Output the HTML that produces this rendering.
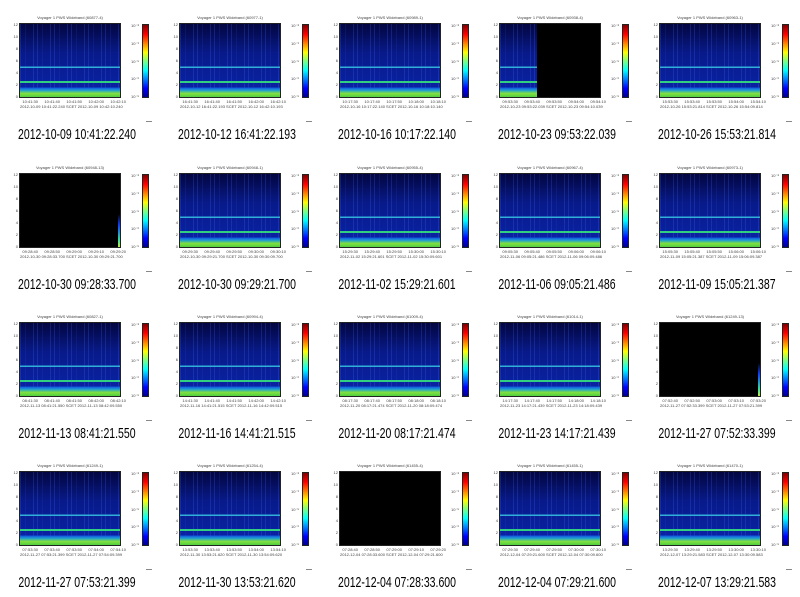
<!DOCTYPE html>
<html><head><meta charset="utf-8"><style>
body{margin:0;width:800px;height:596px;background:#fff;position:relative;overflow:hidden;font-family:"Liberation Sans",sans-serif}
.c{position:absolute;width:160px;height:149px}
.t{position:absolute;left:20px;top:15px;width:100px;text-align:center;font-size:4px;color:#444;white-space:nowrap}
.p{position:absolute;left:20px;top:24px;width:100px;height:73px;outline:1px solid #222;
background:linear-gradient(to bottom,transparent 58%,#30b0d8 58%,#30b0d8 60.5%,transparent 60.5%,transparent 78%,#30d080 78%,#30d080 80.5%,transparent 80.5%,transparent 87%,#1050e0 87%,#20a0d0 91%,#80e040 95%,#50d040 100%),
repeating-linear-gradient(90deg,rgba(70,110,255,.22) 0 1px,transparent 1px 5px,rgba(50,80,220,.15) 5px 6px,transparent 6px 13px,rgba(80,120,255,.2) 13px 14px,transparent 14px 17px),
linear-gradient(#030640,#081a8a 40%,#0a24a8)}
.b{position:absolute;top:0;bottom:0;right:0;background:#000}
.s{position:absolute;top:0;bottom:0;right:0;width:2px;background:linear-gradient(#000 55%,#1040ff 70%,#30e0a0 90%,#c0f040)}
.y{position:absolute;left:8px;top:22px;height:77px;width:10px;font-size:4px;color:#444;display:flex;flex-direction:column;justify-content:space-between;text-align:right}
.x{position:absolute;left:16px;top:99px;width:110px;font-size:4px;color:#444;display:flex;justify-content:space-between}
.x2{position:absolute;left:20px;top:104px;width:110px;font-size:4px;color:#444;white-space:nowrap}
.cb{position:absolute;left:143px;top:25px;width:5px;height:72px;outline:1px solid #222;background:linear-gradient(to top,#00008f,#0000ff 12%,#00ffff 37%,#7fff7f 50%,#ffff00 62%,#ff0000 87%,#800000)}
.cl{position:absolute;left:131px;top:23px;height:76px;font-size:4px;color:#444;display:flex;flex-direction:column;justify-content:space-between}
.d{position:absolute;left:146px;top:121px;width:6px;height:1px;background:#888}
.cap{position:absolute;left:-23px;top:126px;width:200px;text-align:center;font-size:15px;color:#000;transform:scaleX(.7);white-space:nowrap}
</style></head><body>

<div class="c" style="left:0;top:0"><div class="t">Voyager 1 PWS Wideband (60877-4)</div><div class="y"><span>12</span><span>10</span><span>8</span><span>6</span><span>4</span><span>2</span><span>0</span></div><div class="p"></div><div class="x"><span></span><span>10:41:30</span><span>10:41:40</span><span>10:41:50</span><span>10:42:00</span><span>10:42:10</span></div><div class="x2">2012-10-09 10:41:22.240 SCET 2012-10-09 10:42:10.240</div><div class="cl"><span>10⁻⁸</span><span>10⁻⁹</span><span>10⁻⁵</span><span>10⁻⁶</span><span>10⁻⁵</span></div><div class="cb"></div><div class="d"></div><div class="cap">2012-10-09 10:41:22.240</div></div>

<div class="c" style="left:160px;top:0"><div class="t">Voyager 1 PWS Wideband (60977-1)</div><div class="y"><span>12</span><span>10</span><span>8</span><span>6</span><span>4</span><span>2</span><span>0</span></div><div class="p"></div><div class="x"><span></span><span>16:41:30</span><span>16:41:40</span><span>16:41:50</span><span>16:42:00</span><span>16:42:10</span></div><div class="x2">2012-10-12 16:41:22.193 SCET 2012-10-12 16:42:10.193</div><div class="cl"><span>10⁻⁸</span><span>10⁻⁹</span><span>10⁻⁵</span><span>10⁻⁶</span><span>10⁻⁵</span></div><div class="cb"></div><div class="d"></div><div class="cap">2012-10-12 16:41:22.193</div></div>

<div class="c" style="left:320px;top:0"><div class="t">Voyager 1 PWS Wideband (60989-1)</div><div class="y"><span>12</span><span>10</span><span>8</span><span>6</span><span>4</span><span>2</span><span>0</span></div><div class="p"></div><div class="x"><span></span><span>10:17:30</span><span>10:17:40</span><span>10:17:50</span><span>10:18:00</span><span>10:18:10</span></div><div class="x2">2012-10-16 10:17:22.140 SCET 2012-10-16 10:18:10.140</div><div class="cl"><span>10⁻⁸</span><span>10⁻⁹</span><span>10⁻⁵</span><span>10⁻⁶</span><span>10⁻⁵</span></div><div class="cb"></div><div class="d"></div><div class="cap">2012-10-16 10:17:22.140</div></div>

<div class="c" style="left:480px;top:0"><div class="t">Voyager 1 PWS Wideband (60938-4)</div><div class="y"><span>12</span><span>10</span><span>8</span><span>6</span><span>4</span><span>2</span><span>0</span></div><div class="p"><div class="b" style="left:37%"></div></div><div class="x"><span></span><span>09:53:30</span><span>09:53:40</span><span>09:53:50</span><span>09:54:00</span><span>09:54:10</span></div><div class="x2">2012-10-23 09:53:22.039 SCET 2012-10-23 09:54:10.039</div><div class="cl"><span>10⁻⁸</span><span>10⁻⁹</span><span>10⁻⁵</span><span>10⁻⁶</span><span>10⁻⁵</span></div><div class="cb"></div><div class="d"></div><div class="cap">2012-10-23 09:53:22.039</div></div>

<div class="c" style="left:640px;top:0"><div class="t">Voyager 1 PWS Wideband (60963-1)</div><div class="y"><span>12</span><span>10</span><span>8</span><span>6</span><span>4</span><span>2</span><span>0</span></div><div class="p"></div><div class="x"><span></span><span>15:53:30</span><span>15:53:40</span><span>15:53:50</span><span>15:54:00</span><span>15:54:10</span></div><div class="x2">2012-10-26 15:53:21.814 SCET 2012-10-26 15:54:09.814</div><div class="cl"><span>10⁻⁸</span><span>10⁻⁹</span><span>10⁻⁵</span><span>10⁻⁶</span><span>10⁻⁵</span></div><div class="cb"></div><div class="d"></div><div class="cap">2012-10-26 15:53:21.814</div></div>

<div class="c" style="left:0;top:150px"><div class="t">Voyager 1 PWS Wideband (60948-13)</div><div class="y"><span>12</span><span>10</span><span>8</span><span>6</span><span>4</span><span>2</span><span>0</span></div><div class="p"><div class="b" style="left:0"></div><div class="s"></div></div><div class="x"><span></span><span>09:28:40</span><span>09:28:50</span><span>09:29:00</span><span>09:29:10</span><span>09:29:20</span></div><div class="x2">2012-10-30 09:28:33.700 SCET 2012-10-30 09:29:21.700</div><div class="cl"><span>10⁻⁸</span><span>10⁻⁹</span><span>10⁻⁵</span><span>10⁻⁶</span><span>10⁻⁵</span></div><div class="cb"></div><div class="d"></div><div class="cap">2012-10-30 09:28:33.700</div></div>

<div class="c" style="left:160px;top:150px"><div class="t">Voyager 1 PWS Wideband (60948-1)</div><div class="y"><span>12</span><span>10</span><span>8</span><span>6</span><span>4</span><span>2</span><span>0</span></div><div class="p"></div><div class="x"><span></span><span>09:29:30</span><span>09:29:40</span><span>09:29:50</span><span>09:30:00</span><span>09:30:10</span></div><div class="x2">2012-10-30 09:29:21.700 SCET 2012-10-30 09:30:09.700</div><div class="cl"><span>10⁻⁸</span><span>10⁻⁹</span><span>10⁻⁵</span><span>10⁻⁶</span><span>10⁻⁵</span></div><div class="cb"></div><div class="d"></div><div class="cap">2012-10-30 09:29:21.700</div></div>

<div class="c" style="left:320px;top:150px"><div class="t">Voyager 1 PWS Wideband (60955-4)</div><div class="y"><span>12</span><span>10</span><span>8</span><span>6</span><span>4</span><span>2</span><span>0</span></div><div class="p"></div><div class="x"><span></span><span>15:29:30</span><span>15:29:40</span><span>15:29:50</span><span>15:30:00</span><span>15:30:10</span></div><div class="x2">2012-11-02 15:29:21.601 SCET 2012-11-02 15:30:09.601</div><div class="cl"><span>10⁻⁸</span><span>10⁻⁹</span><span>10⁻⁵</span><span>10⁻⁶</span><span>10⁻⁵</span></div><div class="cb"></div><div class="d"></div><div class="cap">2012-11-02 15:29:21.601</div></div>

<div class="c" style="left:480px;top:150px"><div class="t">Voyager 1 PWS Wideband (60967-4)</div><div class="y"><span>12</span><span>10</span><span>8</span><span>6</span><span>4</span><span>2</span><span>0</span></div><div class="p"></div><div class="x"><span></span><span>09:05:30</span><span>09:05:40</span><span>09:05:50</span><span>09:06:00</span><span>09:06:10</span></div><div class="x2">2012-11-06 09:05:21.486 SCET 2012-11-06 09:06:09.486</div><div class="cl"><span>10⁻⁸</span><span>10⁻⁹</span><span>10⁻⁵</span><span>10⁻⁶</span><span>10⁻⁵</span></div><div class="cb"></div><div class="d"></div><div class="cap">2012-11-06 09:05:21.486</div></div>

<div class="c" style="left:640px;top:150px"><div class="t">Voyager 1 PWS Wideband (60973-1)</div><div class="y"><span>12</span><span>10</span><span>8</span><span>6</span><span>4</span><span>2</span><span>0</span></div><div class="p"></div><div class="x"><span></span><span>15:05:30</span><span>15:05:40</span><span>15:05:50</span><span>15:06:00</span><span>15:06:10</span></div><div class="x2">2012-11-09 15:05:21.387 SCET 2012-11-09 15:06:09.387</div><div class="cl"><span>10⁻⁸</span><span>10⁻⁹</span><span>10⁻⁵</span><span>10⁻⁶</span><span>10⁻⁵</span></div><div class="cb"></div><div class="d"></div><div class="cap">2012-11-09 15:05:21.387</div></div>

<div class="c" style="left:0;top:299px"><div class="t">Voyager 1 PWS Wideband (60827-1)</div><div class="y"><span>12</span><span>10</span><span>8</span><span>6</span><span>4</span><span>2</span><span>0</span></div><div class="p"></div><div class="x"><span></span><span>08:41:30</span><span>08:41:40</span><span>08:41:50</span><span>08:42:00</span><span>08:42:10</span></div><div class="x2">2012-11-13 08:41:21.550 SCET 2012-11-13 08:42:09.550</div><div class="cl"><span>10⁻⁸</span><span>10⁻⁹</span><span>10⁻⁵</span><span>10⁻⁶</span><span>10⁻⁵</span></div><div class="cb"></div><div class="d"></div><div class="cap">2012-11-13 08:41:21.550</div></div>

<div class="c" style="left:160px;top:299px"><div class="t">Voyager 1 PWS Wideband (60994-4)</div><div class="y"><span>12</span><span>10</span><span>8</span><span>6</span><span>4</span><span>2</span><span>0</span></div><div class="p"></div><div class="x"><span></span><span>14:41:30</span><span>14:41:40</span><span>14:41:50</span><span>14:42:00</span><span>14:42:10</span></div><div class="x2">2012-11-16 14:41:21.515 SCET 2012-11-16 14:42:09.515</div><div class="cl"><span>10⁻⁸</span><span>10⁻⁹</span><span>10⁻⁵</span><span>10⁻⁶</span><span>10⁻⁵</span></div><div class="cb"></div><div class="d"></div><div class="cap">2012-11-16 14:41:21.515</div></div>

<div class="c" style="left:320px;top:299px"><div class="t">Voyager 1 PWS Wideband (61009-4)</div><div class="y"><span>12</span><span>10</span><span>8</span><span>6</span><span>4</span><span>2</span><span>0</span></div><div class="p"></div><div class="x"><span></span><span>08:17:30</span><span>08:17:40</span><span>08:17:50</span><span>08:18:00</span><span>08:18:10</span></div><div class="x2">2012-11-20 08:17:21.474 SCET 2012-11-20 08:18:09.474</div><div class="cl"><span>10⁻⁸</span><span>10⁻⁹</span><span>10⁻⁵</span><span>10⁻⁶</span><span>10⁻⁵</span></div><div class="cb"></div><div class="d"></div><div class="cap">2012-11-20 08:17:21.474</div></div>

<div class="c" style="left:480px;top:299px"><div class="t">Voyager 1 PWS Wideband (61014-1)</div><div class="y"><span>12</span><span>10</span><span>8</span><span>6</span><span>4</span><span>2</span><span>0</span></div><div class="p"></div><div class="x"><span></span><span>14:17:30</span><span>14:17:40</span><span>14:17:50</span><span>14:18:00</span><span>14:18:10</span></div><div class="x2">2012-11-23 14:17:21.439 SCET 2012-11-23 14:18:09.439</div><div class="cl"><span>10⁻⁸</span><span>10⁻⁹</span><span>10⁻⁵</span><span>10⁻⁶</span><span>10⁻⁵</span></div><div class="cb"></div><div class="d"></div><div class="cap">2012-11-23 14:17:21.439</div></div>

<div class="c" style="left:640px;top:299px"><div class="t">Voyager 1 PWS Wideband (61249-13)</div><div class="y"><span>12</span><span>10</span><span>8</span><span>6</span><span>4</span><span>2</span><span>0</span></div><div class="p"><div class="b" style="left:0"></div><div class="s"></div></div><div class="x"><span></span><span>07:52:40</span><span>07:52:50</span><span>07:53:00</span><span>07:53:10</span><span>07:53:20</span></div><div class="x2">2012-11-27 07:52:33.399 SCET 2012-11-27 07:53:21.399</div><div class="cl"><span>10⁻⁸</span><span>10⁻⁹</span><span>10⁻⁵</span><span>10⁻⁶</span><span>10⁻⁵</span></div><div class="cb"></div><div class="d"></div><div class="cap">2012-11-27 07:52:33.399</div></div>

<div class="c" style="left:0;top:448px"><div class="t">Voyager 1 PWS Wideband (61249-1)</div><div class="y"><span>12</span><span>10</span><span>8</span><span>6</span><span>4</span><span>2</span><span>0</span></div><div class="p"></div><div class="x"><span></span><span>07:53:30</span><span>07:53:40</span><span>07:53:50</span><span>07:54:00</span><span>07:54:10</span></div><div class="x2">2012-11-27 07:53:21.399 SCET 2012-11-27 07:54:09.399</div><div class="cl"><span>10⁻⁸</span><span>10⁻⁹</span><span>10⁻⁵</span><span>10⁻⁶</span><span>10⁻⁵</span></div><div class="cb"></div><div class="d"></div><div class="cap">2012-11-27 07:53:21.399</div></div>

<div class="c" style="left:160px;top:448px"><div class="t">Voyager 1 PWS Wideband (61254-4)</div><div class="y"><span>12</span><span>10</span><span>8</span><span>6</span><span>4</span><span>2</span><span>0</span></div><div class="p"></div><div class="x"><span></span><span>13:53:30</span><span>13:53:40</span><span>13:53:50</span><span>13:54:00</span><span>13:54:10</span></div><div class="x2">2012-11-30 13:53:21.620 SCET 2012-11-30 13:54:09.620</div><div class="cl"><span>10⁻⁸</span><span>10⁻⁹</span><span>10⁻⁵</span><span>10⁻⁶</span><span>10⁻⁵</span></div><div class="cb"></div><div class="d"></div><div class="cap">2012-11-30 13:53:21.620</div></div>

<div class="c" style="left:320px;top:448px"><div class="t">Voyager 1 PWS Wideband (61455-4)</div><div class="y"><span>12</span><span>10</span><span>8</span><span>6</span><span>4</span><span>2</span><span>0</span></div><div class="p"><div class="b" style="left:0"></div></div><div class="x"><span></span><span>07:28:40</span><span>07:28:50</span><span>07:29:00</span><span>07:29:10</span><span>07:29:20</span></div><div class="x2">2012-12-04 07:28:33.600 SCET 2012-12-04 07:29:21.600</div><div class="cl"><span>10⁻⁸</span><span>10⁻⁹</span><span>10⁻⁵</span><span>10⁻⁶</span><span>10⁻⁵</span></div><div class="cb"></div><div class="d"></div><div class="cap">2012-12-04 07:28:33.600</div></div>

<div class="c" style="left:480px;top:448px"><div class="t">Voyager 1 PWS Wideband (61455-1)</div><div class="y"><span>12</span><span>10</span><span>8</span><span>6</span><span>4</span><span>2</span><span>0</span></div><div class="p"></div><div class="x"><span></span><span>07:29:30</span><span>07:29:40</span><span>07:29:50</span><span>07:30:00</span><span>07:30:10</span></div><div class="x2">2012-12-04 07:29:21.600 SCET 2012-12-04 07:30:09.600</div><div class="cl"><span>10⁻⁸</span><span>10⁻⁹</span><span>10⁻⁵</span><span>10⁻⁶</span><span>10⁻⁵</span></div><div class="cb"></div><div class="d"></div><div class="cap">2012-12-04 07:29:21.600</div></div>

<div class="c" style="left:640px;top:448px"><div class="t">Voyager 1 PWS Wideband (61470-1)</div><div class="y"><span>12</span><span>10</span><span>8</span><span>6</span><span>4</span><span>2</span><span>0</span></div><div class="p"></div><div class="x"><span></span><span>13:29:30</span><span>13:29:40</span><span>13:29:50</span><span>13:30:00</span><span>13:30:10</span></div><div class="x2">2012-12-07 13:29:21.583 SCET 2012-12-07 13:30:09.583</div><div class="cl"><span>10⁻⁸</span><span>10⁻⁹</span><span>10⁻⁵</span><span>10⁻⁶</span><span>10⁻⁵</span></div><div class="cb"></div><div class="d"></div><div class="cap">2012-12-07 13:29:21.583</div></div>

</body></html>
